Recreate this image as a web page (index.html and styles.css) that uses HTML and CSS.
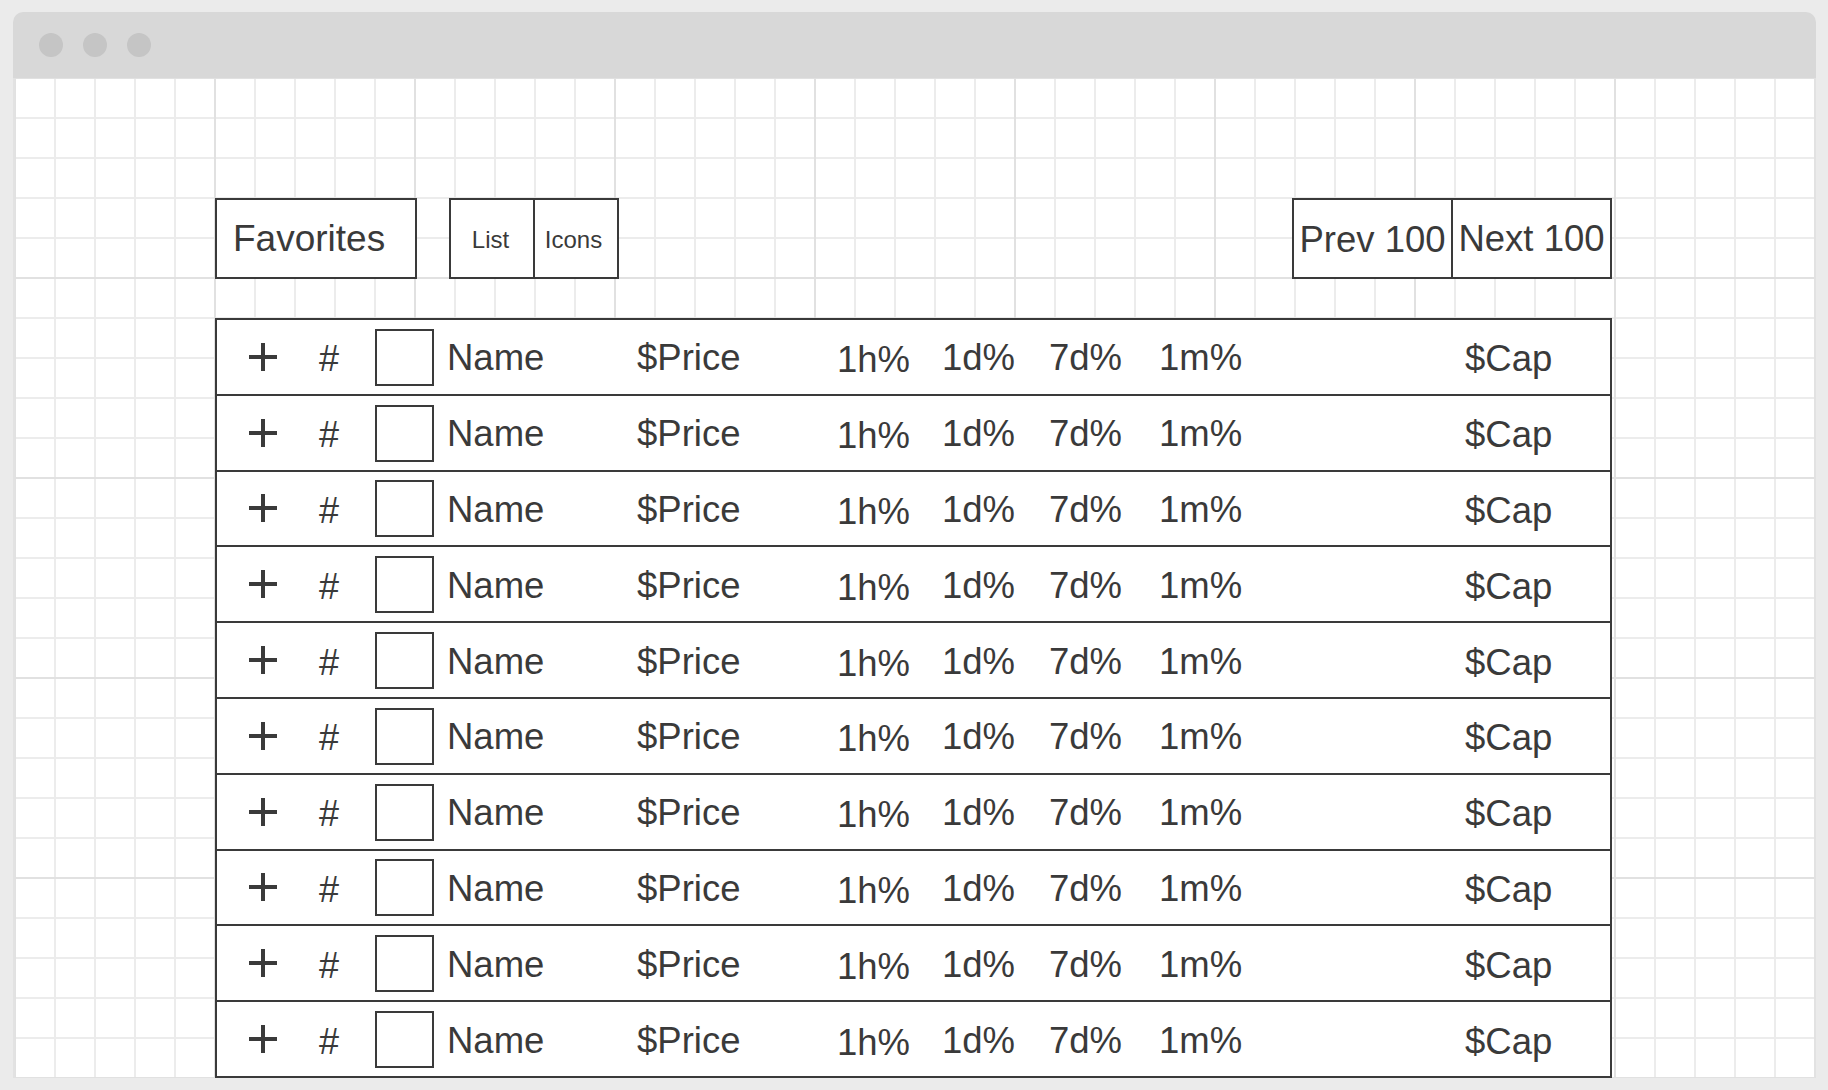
FILE: index.html
```html
<!DOCTYPE html>
<html>
<head>
<meta charset="utf-8">
<link rel="stylesheet" href="styles.css">
</head>
<body>
<div class="window">
  <div class="titlebar">
    <span class="dot"></span><span class="dot"></span><span class="dot"></span>
  </div>
  <div class="canvas">
    <div class="toolbar">
      <div class="left-tools">
        <div class="btn fav">Favorites</div>
        <div class="seg small">
          <div class="seg-btn list">List</div>
          <div class="seg-btn icons">Icons</div>
        </div>
      </div>
      <div class="seg big">
        <div class="seg-btn prev">Prev 100</div>
        <div class="seg-btn next">Next 100</div>
      </div>
    </div>
    <div class="table">
      <div class="row"><div class="c-plus"><span class="plus"></span></div><div class="c-hash">#</div><div class="c-sq"><span class="sq"></span></div><div class="c-name">Name</div><div class="c-price">$Price</div><div class="c-1h">1h%</div><div class="c-1d">1d%</div><div class="c-7d">7d%</div><div class="c-1m">1m%</div><div class="c-cap">$Cap</div></div>
      <div class="row"><div class="c-plus"><span class="plus"></span></div><div class="c-hash">#</div><div class="c-sq"><span class="sq"></span></div><div class="c-name">Name</div><div class="c-price">$Price</div><div class="c-1h">1h%</div><div class="c-1d">1d%</div><div class="c-7d">7d%</div><div class="c-1m">1m%</div><div class="c-cap">$Cap</div></div>
      <div class="row"><div class="c-plus"><span class="plus"></span></div><div class="c-hash">#</div><div class="c-sq"><span class="sq"></span></div><div class="c-name">Name</div><div class="c-price">$Price</div><div class="c-1h">1h%</div><div class="c-1d">1d%</div><div class="c-7d">7d%</div><div class="c-1m">1m%</div><div class="c-cap">$Cap</div></div>
      <div class="row"><div class="c-plus"><span class="plus"></span></div><div class="c-hash">#</div><div class="c-sq"><span class="sq"></span></div><div class="c-name">Name</div><div class="c-price">$Price</div><div class="c-1h">1h%</div><div class="c-1d">1d%</div><div class="c-7d">7d%</div><div class="c-1m">1m%</div><div class="c-cap">$Cap</div></div>
      <div class="row"><div class="c-plus"><span class="plus"></span></div><div class="c-hash">#</div><div class="c-sq"><span class="sq"></span></div><div class="c-name">Name</div><div class="c-price">$Price</div><div class="c-1h">1h%</div><div class="c-1d">1d%</div><div class="c-7d">7d%</div><div class="c-1m">1m%</div><div class="c-cap">$Cap</div></div>
      <div class="row"><div class="c-plus"><span class="plus"></span></div><div class="c-hash">#</div><div class="c-sq"><span class="sq"></span></div><div class="c-name">Name</div><div class="c-price">$Price</div><div class="c-1h">1h%</div><div class="c-1d">1d%</div><div class="c-7d">7d%</div><div class="c-1m">1m%</div><div class="c-cap">$Cap</div></div>
      <div class="row"><div class="c-plus"><span class="plus"></span></div><div class="c-hash">#</div><div class="c-sq"><span class="sq"></span></div><div class="c-name">Name</div><div class="c-price">$Price</div><div class="c-1h">1h%</div><div class="c-1d">1d%</div><div class="c-7d">7d%</div><div class="c-1m">1m%</div><div class="c-cap">$Cap</div></div>
      <div class="row"><div class="c-plus"><span class="plus"></span></div><div class="c-hash">#</div><div class="c-sq"><span class="sq"></span></div><div class="c-name">Name</div><div class="c-price">$Price</div><div class="c-1h">1h%</div><div class="c-1d">1d%</div><div class="c-7d">7d%</div><div class="c-1m">1m%</div><div class="c-cap">$Cap</div></div>
      <div class="row"><div class="c-plus"><span class="plus"></span></div><div class="c-hash">#</div><div class="c-sq"><span class="sq"></span></div><div class="c-name">Name</div><div class="c-price">$Price</div><div class="c-1h">1h%</div><div class="c-1d">1d%</div><div class="c-7d">7d%</div><div class="c-1m">1m%</div><div class="c-cap">$Cap</div></div>
      <div class="row"><div class="c-plus"><span class="plus"></span></div><div class="c-hash">#</div><div class="c-sq"><span class="sq"></span></div><div class="c-name">Name</div><div class="c-price">$Price</div><div class="c-1h">1h%</div><div class="c-1d">1d%</div><div class="c-7d">7d%</div><div class="c-1m">1m%</div><div class="c-cap">$Cap</div></div>
    </div>
  </div>
</div>
</body>
</html>
```
FILE: styles.css
```css
html, body {
  margin: 0;
  padding: 0;
  background: #ebebeb;
  width: 1828px;
  height: 1090px;
  overflow: hidden;
  font-family: "Liberation Sans", Arial, sans-serif;
  color: #3a3a3a;
}

.window {
  margin: 12px 0 0 13px;
  width: 1803px;
  height: 1066px;
  background: #e2e2e2;
  border-radius: 10px 10px 0 0;
  overflow: hidden;
  display: flex;
  flex-direction: column;
  padding: 0 2px;
  box-sizing: border-box;
}

.titlebar {
  height: 66px;
  flex: none;
  background: #d8d8d8;
  margin: 0 -2px;
  display: flex;
  align-items: center;
  gap: 20px;
  padding-left: 26px;
  border-radius: 10px 10px 0 0;
}

.dot {
  width: 24px;
  height: 24px;
  border-radius: 50%;
  background: #c5c5c5;
}

.canvas {
  flex: 1;
  overflow: hidden;
  background-color: #ffffff;
  background-image:
    linear-gradient(to right, #e1e1e1 2px, transparent 2px),
    linear-gradient(to bottom, #e1e1e1 2px, transparent 2px),
    linear-gradient(to right, #ececec 2px, transparent 2px),
    linear-gradient(to bottom, #ececec 2px, transparent 2px);
  background-size: 200px 200px, 200px 200px, 40px 40px, 40px 40px;
  background-position: -1px -1px, -1px -1px, -1px -1px, -1px -1px;
  padding: 120px 0 0 200px;
  box-sizing: border-box;
}

.toolbar {
  width: 1397px;
  height: 81px;
  display: flex;
  justify-content: space-between;
}

.left-tools {
  display: flex;
  gap: 32px;
}

.btn, .seg {
  border: 2px solid #3a3a3a;
  background: #ffffff;
  box-sizing: border-box;
  height: 81px;
}

.fav {
  width: 202px;
  font-size: 37px;
  display: flex;
  align-items: center;
  padding-left: 16px;
  box-sizing: border-box;
}

.seg {
  display: flex;
}

.seg-btn {
  display: flex;
  align-items: center;
  justify-content: center;
  box-sizing: border-box;
}

.seg-btn + .seg-btn {
  border-left: 2px solid #3a3a3a;
}

.small .seg-btn {
  font-size: 24px;
  padding-top: 3px;
}

.list { width: 82px; padding-right: 3px; }
.icons { width: 84px; padding-right: 5px; }

.big .seg-btn {
  font-size: 36.5px;
}

.big .prev { width: 157px; padding-top: 3px; }
.big .next { width: 159px; }

.table {
  margin-top: 39px;
  width: 1397px;
  border: 2px solid #3a3a3a;
  border-bottom: none;
  box-sizing: border-box;
  background: #ffffff;
}

.row {
  height: 75.8px;
  box-sizing: border-box;
  border-bottom: 2px solid #3a3a3a;
  display: grid;
  grid-template-columns: 102px 56px 72px 190px 200px 105px 107px 110px 306px 1fr;
  align-items: center;
  font-size: 36.5px;
}

.row > div {
  display: flex;
  align-items: center;
  height: 100%;
  box-sizing: border-box;
  white-space: nowrap;
  padding-top: 3px;
}

.row > .c-plus {
  padding-left: 32px;
  padding-top: 0;
}

.plus {
  position: relative;
  width: 28px;
  height: 28px;
  display: block;
}

.plus::before, .plus::after {
  content: "";
  position: absolute;
  background: #3a3a3a;
}

.plus::before {
  left: 0;
  right: 0;
  top: 12px;
  height: 4px;
}

.plus::after {
  top: 0;
  bottom: 0;
  left: 12px;
  width: 4px;
}

.row > .c-hash {
  padding-top: 5px;
  font-size: 36px;
}

.row > .c-sq {
  padding-top: 0;
}

.sq {
  display: block;
  width: 59px;
  height: 57px;
  border: 2px solid #3a3a3a;
  box-sizing: border-box;
  margin-top: 1px;
}

.row > .c-1h { padding-top: 7px; }
.row > .c-cap { padding-top: 5px; }
```
